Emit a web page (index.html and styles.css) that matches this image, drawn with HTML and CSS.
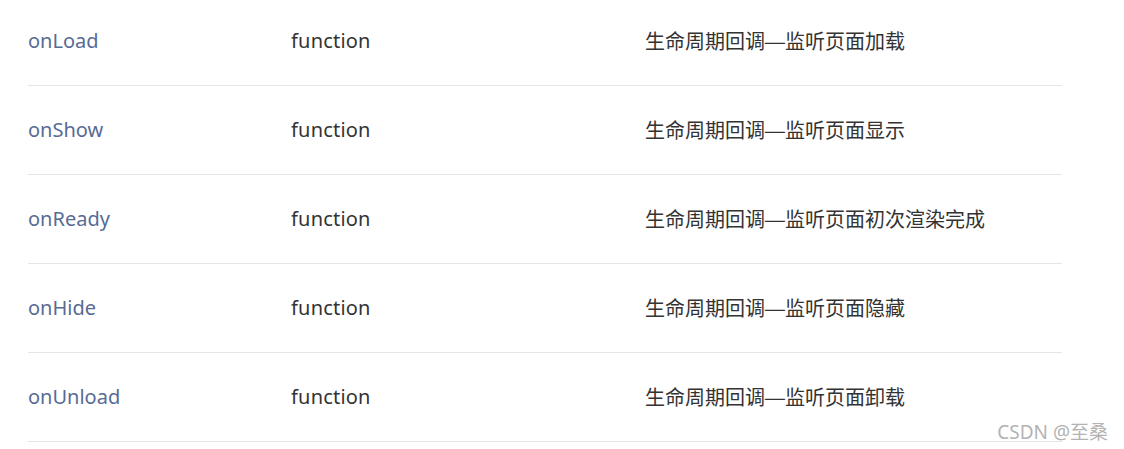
FILE: index.html
```html
<!DOCTYPE html>
<html lang="zh-CN">
<head>
<meta charset="utf-8">
<title>Page lifecycle</title>
<link rel="stylesheet" href="styles.css">
</head>
<body>
<div class="table">
  <div class="row"><span class="name">onLoad</span><span class="type">function</span><span class="desc">生命周期回调<span class="dash">—</span>监听页面加载</span></div>
  <div class="row"><span class="name">onShow</span><span class="type">function</span><span class="desc">生命周期回调<span class="dash">—</span>监听页面显示</span></div>
  <div class="row"><span class="name">onReady</span><span class="type">function</span><span class="desc">生命周期回调<span class="dash">—</span>监听页面初次渲染完成</span></div>
  <div class="row"><span class="name">onHide</span><span class="type">function</span><span class="desc">生命周期回调<span class="dash">—</span>监听页面隐藏</span></div>
  <div class="row"><span class="name">onUnload</span><span class="type">function</span><span class="desc">生命周期回调<span class="dash">—</span>监听页面卸载</span></div>
</div>
<div class="watermark">CSDN @至桑</div>
</body>
</html>
```
FILE: styles.css
```css
html, body {
  margin: 0;
  padding: 0;
  background: #ffffff;
  overflow: hidden;
}
body {
  width: 1124px;
  height: 449px;
  position: relative;
  font-family: "Noto Sans", "Noto Sans CJK SC", sans-serif;
  font-size: 20px;
  color: #333333;
}
.table {
  margin: -3px 0 0 28px;
  width: 1034px;
}
.row {
  display: grid;
  grid-template-columns: 263px 354px 1fr;
  align-items: center;
  height: 89px;
  padding-bottom: 2px;
  box-sizing: border-box;
  border-bottom: 1px solid #e5e5e5;
}
.name {
  color: #576b95;
}
.type {
  letter-spacing: 0.2px;
}
.desc {
  font-family: "Noto Sans CJK SC", sans-serif;
}
.dash {
  display: inline-block;
  width: 20px;
  text-align: center;
  transform: scaleX(1.25);
}
.watermark {
  position: absolute;
  right: 16px;
  top: 417px;
  font-family: "Noto Sans", "Noto Sans CJK SC", sans-serif;
  font-size: 19px;
  color: #b3b3b3;
}
```
